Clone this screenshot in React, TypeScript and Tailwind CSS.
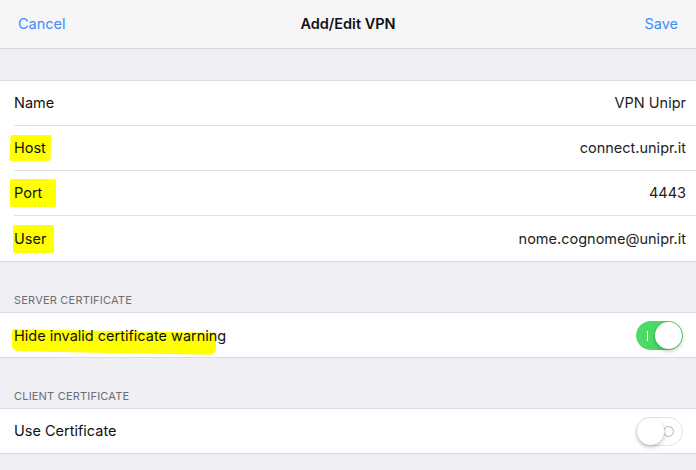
import React, { useState } from 'react';

const font = { fontFamily: 'Inter, "Noto Sans", sans-serif' };

const Mark: React.FC<{ children: React.ReactNode; className?: string }> = ({ children, className }) => (
    <span className="relative inline-block">
        <span className={`absolute bg-[#ffff00] ${className ?? ''}`}></span>
        <span className="relative">{children}</span>
    </span>
);

const Toggle: React.FC<{ on: boolean; onClick: () => void }> = ({ on, onClick }) => (
    <button
        onClick={onClick}
        className={`relative w-[47px] h-[29px] rounded-full border ${on ? 'bg-[#4cd964] border-[#4cd964]' : 'bg-white border-[#e3e3e6]'}`}
    >
        {on ? (
            <span className="absolute left-[10px] top-[9px] w-px h-[10px] bg-white"></span>
        ) : (
            <span className="absolute right-[8px] top-[8px] w-[11px] h-[11px] rounded-full border border-[#b3b3b3]"></span>
        )}
        <span
            className={`absolute top-[0px] w-[27px] h-[27px] rounded-full bg-white shadow-[0_2px_4px_rgba(0,0,0,0.25)] ${on ? 'right-[0px]' : 'left-[0px]'}`}
        ></span>
    </button>
);

const Row: React.FC<{ label: React.ReactNode; value?: React.ReactNode; last?: boolean }> = ({ label, value, last }) => (
    <div className="pl-[14px] bg-white">
        <div className={`h-[45px] flex items-center justify-between pr-[10px] ${last ? '' : 'border-b border-[#e1e1e4]'}`}>
            <div className="text-[14.5px] text-[#111]">{label}</div>
            <div className="text-[14.5px] text-[#222]">{value}</div>
        </div>
    </div>
);

export default function App() {
    const [hide, setHide] = useState(true);
    const [useCert, setUseCert] = useState(false);

    return (
        <div className="w-[696px] h-[470px] overflow-hidden bg-[#efeff4] flex flex-col" style={font}>
            <div className="h-[49px] shrink-0 bg-[#f6f6f8] border-b border-[#d6d6da] grid grid-cols-3 items-center px-[18px]">
                <span className="text-[14.5px] text-[#3b8ff6] justify-self-start">Cancel</span>
                <span className="text-[14.5px] font-semibold text-[#111] justify-self-center">Add/Edit VPN</span>
                <span className="text-[14.5px] text-[#3b8ff6] justify-self-end">Save</span>
            </div>

            <div className="h-[31px] shrink-0"></div>

            <div className="border-y border-[#dcdce0]">
                <Row label="Name" value="VPN Unipr" />
                <Row
                    label={<Mark className="-left-[4px] -right-[5px] top-[-2px] bottom-[-2px] rounded-[2px] -skew-x-3">Host</Mark>}
                    value="connect.unipr.it"
                />
                <Row
                    label={<Mark className="-left-[4px] -right-[14px] top-[-3px] bottom-[-3px] rounded-[2px]">Port</Mark>}
                    value="4443"
                />
                <Row
                    label={<Mark className="-left-[1px] -right-[8px] top-[-3px] bottom-[-4px] rounded-[2px]">User</Mark>}
                    value="nome.cognome@unipr.it"
                    last
                />
            </div>

            <div className="h-[50px] shrink-0 flex items-end pb-[4px] pl-[14px]">
                <span className="text-[11px] tracking-[0.2px] text-[#6d6d72]">SERVER CERTIFICATE</span>
            </div>
            <div className="bg-white border-y border-[#dcdce0] h-[46px] flex items-center justify-between pl-[14px] pr-[13px]">
                <Mark className="-left-[2px] right-[10px] top-[8px] bottom-[-6px] rounded-b-[6px] skew-y-[1deg]">
                    <span className="text-[14.5px] text-[#111]">Hide invalid certificate warning</span>
                </Mark>
                <Toggle on={hide} onClick={() => setHide(!hide)} />
            </div>

            <div className="h-[50px] shrink-0 flex items-end pb-[4px] pl-[14px]">
                <span className="text-[11px] tracking-[0.2px] text-[#6d6d72]">CLIENT CERTIFICATE</span>
            </div>
            <div className="bg-white border-y border-[#dcdce0] h-[46px] flex items-center justify-between pl-[14px] pr-[13px]">
                <span className="text-[14.5px] text-[#111]">Use Certificate</span>
                <Toggle on={useCert} onClick={() => setUseCert(!useCert)} />
            </div>
        </div>
    );
}
